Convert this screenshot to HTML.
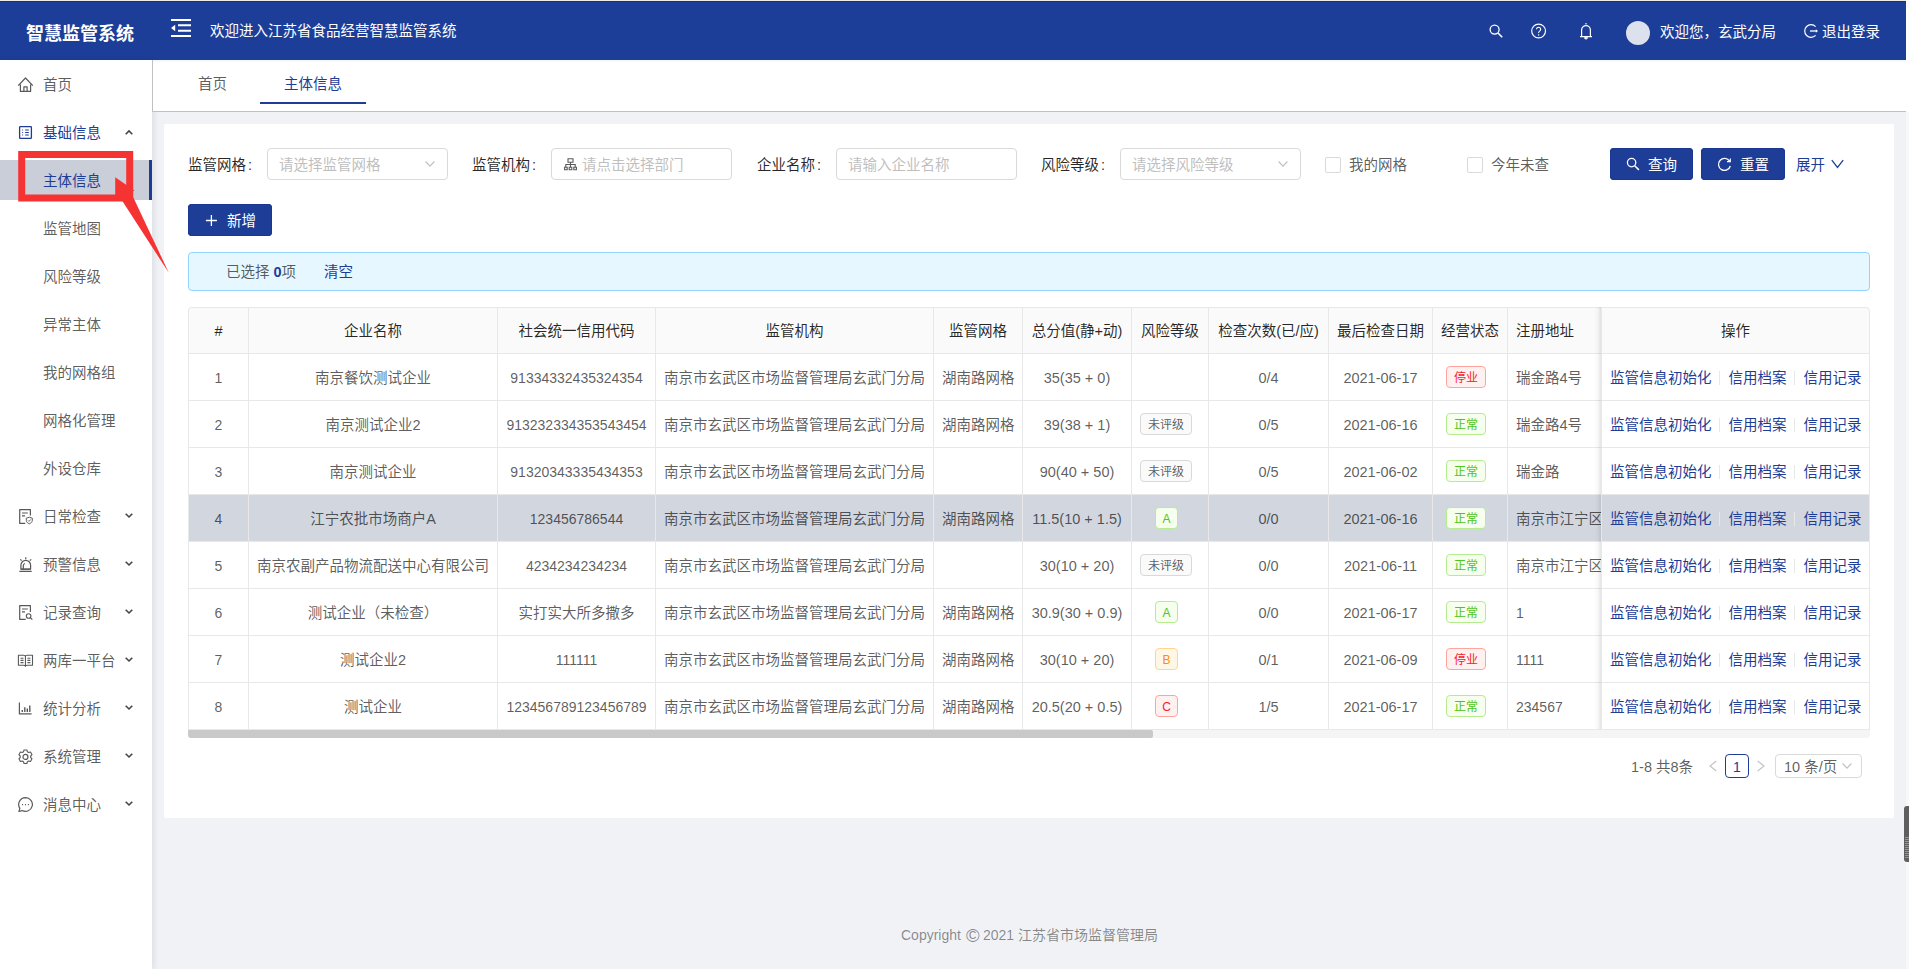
<!DOCTYPE html>
<html lang="zh-CN">
<head>
<meta charset="utf-8">
<title>智慧监管系统</title>
<style>
*{box-sizing:border-box;}
html,body{margin:0;padding:0;}
body{width:1909px;height:969px;overflow:hidden;position:relative;background:#f0f2f5;
 font-family:"Liberation Sans","Noto Sans CJK SC",sans-serif;font-size:14.5px;color:rgba(0,0,0,.65);line-height:22px;}
.abs{position:absolute;}
svg{display:block;}
/* header */
#hdr{position:absolute;left:0;top:1px;width:1906px;height:59px;background:#1d3e98;color:#fff;box-shadow:inset 0 1px 0 #13328e;}
#logo{position:absolute;left:26px;top:0;height:59px;line-height:66px;font-size:18px;font-weight:700;letter-spacing:0;white-space:nowrap;}
#welcome{position:absolute;left:210px;top:0;line-height:60px;white-space:nowrap;}
#user{position:absolute;left:1660px;top:0;line-height:62px;white-space:nowrap;}
#logout{position:absolute;left:1822px;top:0;line-height:62px;white-space:nowrap;}
#avatar{position:absolute;left:1626px;top:20px;width:24px;height:24px;border-radius:50%;background:#dde1ee;}
/* sidebar */
#side{position:absolute;left:0;top:60px;width:152px;height:909px;background:#fff;box-shadow:2px 0 6px rgba(0,21,41,.09);}
.mi{position:absolute;left:0;width:152px;height:40px;line-height:40px;white-space:nowrap;}
.mi span{position:absolute;left:43px;top:1px;}
.mi svg{position:absolute;left:17px;top:12px;}
.mi .arr{position:absolute;left:124px;top:16px;}
.mi.sel{background:#c9ced9;color:#1d3d97;}
.mi.sel:after{content:"";position:absolute;right:0;top:0;width:3px;height:40px;background:#1d3d97;}
.mi.open{color:#1d3d97;}
/* tabs */
#tabs{position:absolute;left:152px;top:60px;width:1754px;height:52px;background:#fff;border-bottom:1px solid #c0c0c0;border-left:1px solid #c0c0c0;box-shadow:inset 0 3px 3px -2px rgba(0,0,0,.06);}
#tabs div{position:absolute;top:13px;line-height:22px;white-space:nowrap;}
/* card */
#card{position:absolute;left:164px;top:124px;width:1730px;height:694px;background:#fff;border-radius:2px;}
.lbl b{font-weight:400;margin-left:2px;}
.lbl{position:absolute;top:154px;line-height:22px;color:rgba(0,0,0,.85);white-space:nowrap;}
.inp{position:absolute;top:148px;height:32px;width:181px;border:1px solid #d9d9d9;border-radius:4px;background:#fff;line-height:30px;color:#bfbfbf;white-space:nowrap;}
.inp span{position:absolute;left:11px;top:1px;}
.btn{position:absolute;height:32px;border-radius:4px;background:#1d3d97;box-shadow:inset 0 0 0 1px #1a3891;color:#fff;line-height:32px;white-space:nowrap;}
.cb{position:absolute;top:157px;width:16px;height:16px;border:1px solid #d9d9d9;border-radius:2px;background:#fff;}
.cbl{position:absolute;top:154px;line-height:22px;white-space:nowrap;}
#alert{position:absolute;left:188px;top:252px;width:1682px;height:39px;background:#e6f7ff;border:1px solid #91d5ff;border-radius:4px;line-height:37px;white-space:nowrap;}
/* table */
#tbl{position:absolute;left:188px;top:307px;width:1682px;border-collapse:separate;border-spacing:0;table-layout:fixed;border-left:1px solid #e8e8e8;border-top:1px solid #e8e8e8;border-radius:4px 4px 0 0;}
#tbl th:first-child{border-top-left-radius:4px;}
#tbl th:last-child{border-top-right-radius:4px;}
#tbl th,#tbl td{height:47px;padding:0 8px;border-right:1px solid #e8e8e8;border-bottom:1px solid #e8e8e8;text-align:center;white-space:nowrap;overflow:hidden;font-weight:400;line-height:22px;}
#tbl th{background:#fafafa;color:rgba(0,0,0,.85);font-weight:400;height:46px;}
#tbl td{background:#fff;padding-top:2px;}
#tbl tr.hl td{background:#d2d6df;}
#tbl .l{text-align:left;}
#tbl .n{font-size:14px;}
#tbl a{color:#1d3d97;text-decoration:none;}
#tbl i{display:inline-block;width:1px;height:14px;background:#e8e8e8;margin:0 8.500px 0 7.500px;vertical-align:-2px;}
.tag{display:inline-block;height:22px;line-height:22px;padding:0 7px;font-size:12px;border:1px solid #d9d9d9;border-radius:4px;background:#fafafa;color:rgba(0,0,0,.65);margin-right:8px;vertical-align:middle;position:relative;top:-2px;}
.tag.g{color:#52c41a;background:#f6ffed;border-color:#b7eb8f;}
.tag.r{color:#f5222d;background:#fff1f0;border-color:#ffa39e;}
.tag.s{padding:0;width:23px;text-align:center;margin-left:.5px;margin-right:7.500px;}
.tag.o{color:#fa8c16;background:#fff7e6;border-color:#ffd591;}
</style>
</head>
<body>
<div class="abs" style="left:0;top:0;width:1909px;height:1px;background:#ecebe6"></div>
<div class="abs" style="left:1906px;top:0;width:3px;height:112px;background:#fff"></div>
<div class="abs" style="left:1906px;top:112px;width:3px;height:857px;background:#f7f8fa"></div>

<div id="hdr">
 <div id="logo">智慧监管系统</div>
 <svg class="abs" style="left:171px;top:18px" width="20" height="18" viewBox="0 0 20 18"><path d="M0 0h20v2H0zM7 5.300h13v2H7zM7 10.700h13v2H7zM0 16h20v2H0zM0 9l4.200-3.200v6.400z" fill="#fff"/></svg>
 <div id="welcome">欢迎进入江苏省食品经营智慧监管系统</div>

 <svg class="abs" style="left:1488px;top:22px" width="16" height="16" viewBox="0 0 16 16" fill="none" stroke="#fff"><circle cx="6.600" cy="6.600" r="4.500" stroke-width="1.300"/><path d="M10 10l4.200 4.200" stroke-width="1.600"/></svg>
 <svg class="abs" style="left:1530px;top:22px" width="17" height="17" viewBox="0 0 17 17" fill="none" stroke="#fff"><circle cx="8.600" cy="8" r="6.900" stroke-width="1.200"/><path d="M6.500 6.300a2.100 2.100 0 1 1 3.200 1.800c-.8.500-1.100.900-1.100 1.700v.3" stroke-width="1.100"/><path d="M8.600 11.300v1.200" stroke-width="1.200"/></svg>
 <svg class="abs" style="left:1579px;top:21px" width="14" height="18" viewBox="0 0 14 18" fill="none" stroke="#fff" stroke-width="1.200"><path d="M7 .9v1.600M2.600 14.600V8a4.400 4.400 0 0 1 8.800 0v6.600M1 14.700h12"/><path d="M5.500 15.600a1.500 1.500 0 0 0 3 0z" fill="#fff" stroke-width=".8"/></svg>
 <svg class="abs" style="left:1803px;top:22px" width="16" height="16" viewBox="0 0 16 16" fill="none" stroke="#fff"><path d="M12.600 3.700a6.300 6.300 0 1 0 0 8.600" stroke-width="1.200"/><path d="M7 8h6.300" stroke-width="1.300"/><path d="M12.800 6.200 15 8l-2.200 1.800z" fill="#fff" stroke="none"/></svg>
 <div id="avatar"></div>
 <div id="user">欢迎您，玄武分局</div>
 <div id="logout">退出登录</div>
</div>

<div id="side">
 <div class="mi" style="top:4px"><svg width="18" height="18" viewBox="0 0 18 18" fill="none" stroke="#595959" stroke-width="1.2" stroke-linejoin="round"><path d="M1.2 9.6 8.5 2l7.3 7.6M3.4 8.6v6.8h10.2V8.6M6.9 15.4v-4.6h3.2v4.6"/></svg><span>首页</span></div>
 <div class="mi open" style="top:52px"><svg width="18" height="18" viewBox="0 0 18 18" fill="none" stroke="#1d3d97" stroke-width="1.3" stroke-linejoin="round"><rect x="2.6" y="2.6" width="11.8" height="11.8" rx=".6"/><path d="M8.200 6h3.600M8.200 8.500h3.600M8.200 11h3.600" stroke-width="1.100"/><path d="M5.200 6h.9M5.200 8.500h.9M5.200 11h.9" stroke-width="1"/></svg><span>基础信息</span><svg class="arr" width="10" height="8" viewBox="0 0 10 8" fill="none" stroke="#444" stroke-width="1.600"><path d="M1.700 6.300 5 3l3.300 3.300"/></svg></div>
 <div class="mi sel" style="top:100px"><span>主体信息</span></div>
 <div class="mi" style="top:148px"><span>监管地图</span></div>
 <div class="mi" style="top:196px"><span>风险等级</span></div>
 <div class="mi" style="top:244px"><span>异常主体</span></div>
 <div class="mi" style="top:292px"><span>我的网格组</span></div>
 <div class="mi" style="top:340px"><span>网格化管理</span></div>
 <div class="mi" style="top:388px"><span>外设仓库</span></div>
 <div class="mi" style="top:436px"><svg width="18" height="18" viewBox="0 0 18 18" fill="none" stroke="#595959" stroke-width="1.2" stroke-linejoin="round"><path d="M13.4 7.6V1.6H2.7v13.8h5.6M5 5h5.8M5 7.8h3"/><path d="M12.3 9.2l3 1v2.3c0 1.6-1.6 2.7-3 3.3-1.400-.6-3-1.700-3-3.300v-2.300z" stroke-width="1"/><path d="M11 12.400l1 1 1.700-1.900" stroke-width=".9"/></svg><span>日常检查</span><svg class="arr" width="10" height="8" viewBox="0 0 10 8" fill="none" stroke="#444" stroke-width="1.600"><path d="M1.700 1.800 5 5l3.300-3.200"/></svg></div>
 <div class="mi" style="top:484px"><svg width="18" height="18" viewBox="0 0 18 18" fill="none" stroke="#595959" stroke-width="1.2" stroke-linejoin="round"><path d="M2.4 15.300h12.300M3.900 13.200V9.200a4.850 4.850 0 0 1 9.700 0v4zM8.750 1.200v2M3.300 3.300l1.300 1.300M14.200 3.300l-1.300 1.300M6.300 12.500V9.600a2.400 2.400 0 0 1 1.600-2.100" /><path d="M3.900 13.200h9.700"/></svg><span>预警信息</span><svg class="arr" width="10" height="8" viewBox="0 0 10 8" fill="none" stroke="#444" stroke-width="1.600"><path d="M1.700 1.800 5 5l3.300-3.200"/></svg></div>
 <div class="mi" style="top:532px"><svg width="18" height="18" viewBox="0 0 18 18" fill="none" stroke="#595959" stroke-width="1.2" stroke-linejoin="round"><path d="M13.400 8V1.600H2.700v13.800h6M5 5h5.800M5 7.800h3"/><circle cx="11.600" cy="12" r="2.300" stroke-width="1.100"/><path d="M13.300 13.700l2 2"/></svg><span>记录查询</span><svg class="arr" width="10" height="8" viewBox="0 0 10 8" fill="none" stroke="#444" stroke-width="1.600"><path d="M1.700 1.800 5 5l3.300-3.200"/></svg></div>
 <div class="mi" style="top:580px"><svg width="18" height="18" viewBox="0 0 18 18" fill="none" stroke="#595959" stroke-width="1.2" stroke-linejoin="round"><path d="M8.450 3.600v10.300M1.400 3.300h5.200c1 0 1.850.4 1.850 1.300 0-.9.850-1.300 1.850-1.300h5.200v10h-5.200c-1 0-1.850.3-1.850 1 0-.7-.85-1-1.850-1H1.400zM3.500 6.200h3M3.500 8.400h3M3.500 10.600h3M10.400 6.200h3M10.400 8.400h3M10.400 10.600h3" stroke-width="1.100"/></svg><span>两库一平台</span><svg class="arr" width="10" height="8" viewBox="0 0 10 8" fill="none" stroke="#444" stroke-width="1.600"><path d="M1.700 1.800 5 5l3.300-3.200"/></svg></div>
 <div class="mi" style="top:628px"><svg width="18" height="18" viewBox="0 0 18 18" fill="none" stroke="#595959" stroke-width="1.2" stroke-linejoin="round"><path d="M2.400 2.400v11.500h12.200"/><path d="M5.300 12v-2M7.800 12V7.200M10.300 12V8.600M12.800 12V5.600" stroke-width="1.400"/></svg><span>统计分析</span><svg class="arr" width="10" height="8" viewBox="0 0 10 8" fill="none" stroke="#444" stroke-width="1.600"><path d="M1.700 1.800 5 5l3.300-3.200"/></svg></div>
 <div class="mi" style="top:676px"><svg width="18" height="18" viewBox="0 0 18 18" fill="none" stroke="#595959" stroke-width="1.2" stroke-linejoin="round"><circle cx="8.450" cy="8.900" r="2.500"/><path d="M7 2l-.5 1.800-1.300.75-1.800-.5-1.500 2.600 1.300 1.350v1.500l-1.300 1.350 1.500 2.600 1.800-.5 1.300.75.500 1.800h2.900l.5-1.800 1.300-.75 1.800.5 1.500-2.600-1.300-1.350v-1.500l1.300-1.350-1.500-2.600-1.800.5-1.300-.75L9.900 2z" stroke-width="1.100"/></svg><span>系统管理</span><svg class="arr" width="10" height="8" viewBox="0 0 10 8" fill="none" stroke="#444" stroke-width="1.600"><path d="M1.700 1.800 5 5l3.300-3.200"/></svg></div>
 <div class="mi" style="top:724px"><svg width="18" height="18" viewBox="0 0 18 18" fill="none" stroke="#595959" stroke-width="1.2" stroke-linejoin="round"><path d="M8.500 1.600a6.900 6.900 0 1 1-3.300 12.960L1.900 15.500l.95-3.200A6.900 6.900 0 0 1 8.500 1.600z"/><path d="M5.100 8.600h1M8 8.600h1M10.900 8.600h1" stroke-width="1.300"/></svg><span>消息中心</span><svg class="arr" width="10" height="8" viewBox="0 0 10 8" fill="none" stroke="#444" stroke-width="1.600"><path d="M1.700 1.800 5 5l3.300-3.200"/></svg></div>
</div>

<div id="tabs">
 <div style="left:45px">首页</div>
 <div style="left:131px;color:#1d3d97">主体信息</div>
 <div style="left:107px;top:42px;width:106px;height:2px;background:#1d3d97"></div>
</div>

<div id="card"></div>

<div class="lbl" style="left:188px">监管网格<b>:</b></div>
<div class="inp" style="left:267px"><span>请选择监管网格</span></div>
<div class="lbl" style="left:472px">监管机构<b>:</b></div>
<div class="inp" style="left:551px"><span style="left:30px">请点击选择部门</span></div>
<div class="lbl" style="left:757px">企业名称<b>:</b></div>
<div class="inp" style="left:836px"><span>请输入企业名称</span></div>
<div class="lbl" style="left:1041px">风险等级<b>:</b></div>
<div class="inp" style="left:1120px"><span>请选择风险等级</span></div>
<div class="cb" style="left:1325px"></div><div class="cbl" style="left:1349px">我的网格</div>
<div class="cb" style="left:1467px"></div><div class="cbl" style="left:1491px">今年未查</div>
<div class="btn" style="left:1610px;top:148px;width:83px"><span class="abs" style="left:38px;top:1px">查询</span></div>
<div class="btn" style="left:1701px;top:148px;width:84px"><span class="abs" style="left:39px;top:1px">重置</span></div>
<div class="abs" style="left:1796px;top:154px;color:#1d3d97;white-space:nowrap">展开</div>
<div class="btn" style="left:188px;top:204px;width:84px"><span class="abs" style="left:39px;top:1px">新增</span></div>

<div id="alert"><span class="abs" style="left:37px;top:1px">已选择 <b style="color:#1d3d97;font-weight:700">0</b>项</span><span class="abs" style="left:135px;top:1px;color:#1d3d97">清空</span></div>

<table id="tbl">
<colgroup><col style="width:60px"><col style="width:249px"><col style="width:158px"><col style="width:278px"><col style="width:89px"><col style="width:109px"><col style="width:77px"><col style="width:120px"><col style="width:104px"><col style="width:75px"><col style="width:94px"><col style="width:268px"></colgroup>
<tr><th>#</th><th>企业名称</th><th>社会统一信用代码</th><th>监管机构</th><th>监管网格</th><th>总分值(静+动)</th><th>风险等级</th><th>检查次数(已/应)</th><th>最后检查日期</th><th>经营状态</th><th class="l">注册地址</th><th>操作</th></tr>
<!--rows-->
<tr><td class="n">1</td><td>南京餐饮测试企业</td><td class="n">91334332435324354</td><td>南京市玄武区市场监督管理局玄武门分局</td><td>湖南路网格</td><td>35(35 + 0)</td><td></td><td>0/4</td><td>2021-06-17</td><td><span class="tag r">停业</span></td><td class="l">瑞金路4号</td><td><a>监管信息初始化</a><i></i><a>信用档案</a><i></i><a>信用记录</a></td></tr>
<tr><td class="n">2</td><td>南京测试企业2</td><td class="n">913232334353543454</td><td>南京市玄武区市场监督管理局玄武门分局</td><td>湖南路网格</td><td>39(38 + 1)</td><td><span class="tag">未评级</span></td><td>0/5</td><td>2021-06-16</td><td><span class="tag g">正常</span></td><td class="l">瑞金路4号</td><td><a>监管信息初始化</a><i></i><a>信用档案</a><i></i><a>信用记录</a></td></tr>
<tr><td class="n">3</td><td>南京测试企业</td><td class="n">91320343335434353</td><td>南京市玄武区市场监督管理局玄武门分局</td><td></td><td>90(40 + 50)</td><td><span class="tag">未评级</span></td><td>0/5</td><td>2021-06-02</td><td><span class="tag g">正常</span></td><td class="l">瑞金路</td><td><a>监管信息初始化</a><i></i><a>信用档案</a><i></i><a>信用记录</a></td></tr>
<tr class="hl"><td class="n">4</td><td>江宁农批市场商户A</td><td class="n">123456786544</td><td>南京市玄武区市场监督管理局玄武门分局</td><td>湖南路网格</td><td>11.5(10 + 1.5)</td><td><span class="tag s g">A</span></td><td>0/0</td><td>2021-06-16</td><td><span class="tag g">正常</span></td><td class="l">南京市江宁区农副产品物流中心</td><td><a>监管信息初始化</a><i></i><a>信用档案</a><i></i><a>信用记录</a></td></tr>
<tr><td class="n">5</td><td>南京农副产品物流配送中心有限公司</td><td class="n">4234234234234</td><td>南京市玄武区市场监督管理局玄武门分局</td><td></td><td>30(10 + 20)</td><td><span class="tag">未评级</span></td><td>0/0</td><td>2021-06-11</td><td><span class="tag g">正常</span></td><td class="l">南京市江宁区农副产品物流中心</td><td><a>监管信息初始化</a><i></i><a>信用档案</a><i></i><a>信用记录</a></td></tr>
<tr><td class="n">6</td><td>测试企业（未检查）</td><td>实打实大所多撒多</td><td>南京市玄武区市场监督管理局玄武门分局</td><td>湖南路网格</td><td>30.9(30 + 0.9)</td><td><span class="tag s g">A</span></td><td>0/0</td><td>2021-06-17</td><td><span class="tag g">正常</span></td><td class="l n">1</td><td><a>监管信息初始化</a><i></i><a>信用档案</a><i></i><a>信用记录</a></td></tr>
<tr><td class="n">7</td><td>测试企业2</td><td class="n">111111</td><td>南京市玄武区市场监督管理局玄武门分局</td><td>湖南路网格</td><td>30(10 + 20)</td><td><span class="tag s o">B</span></td><td>0/1</td><td>2021-06-09</td><td><span class="tag r">停业</span></td><td class="l n">1111</td><td><a>监管信息初始化</a><i></i><a>信用档案</a><i></i><a>信用记录</a></td></tr>
<tr><td class="n">8</td><td>测试企业</td><td class="n">123456789123456789</td><td>南京市玄武区市场监督管理局玄武门分局</td><td>湖南路网格</td><td>20.5(20 + 0.5)</td><td><span class="tag s r">C</span></td><td>1/5</td><td>2021-06-17</td><td><span class="tag g">正常</span></td><td class="l n">234567</td><td><a>监管信息初始化</a><i></i><a>信用档案</a><i></i><a>信用记录</a></td></tr>
<!--/rows-->
</table>


<!-- filter icons -->
<svg class="abs" style="left:425px;top:159px" width="10" height="10" viewBox="0 0 10 10" fill="none" stroke="#bfbfbf" stroke-width="1.100"><path d="M.6 2.500 5 7.200l4.400-4.700"/></svg>
<svg class="abs" style="left:1278px;top:159px" width="10" height="10" viewBox="0 0 10 10" fill="none" stroke="#bfbfbf" stroke-width="1.100"><path d="M.6 2.500 5 7.200l4.400-4.700"/></svg>
<svg class="abs" style="left:564px;top:158px" width="13" height="13" viewBox="0 0 13 13" fill="none" stroke="#595959" stroke-width="1.100"><path d="M4 .8h5v3.400H4zM6.500 4.200v2.300M1.800 9V6.500h9.400V9M6.500 6.500V9M.6 9.200h2.600v2.600H.6zM5.200 9.200h2.600v2.600H5.200zM9.800 9.200h2.600v2.600H9.800z"/></svg>
<svg class="abs" style="left:1626px;top:157px" width="14" height="14" viewBox="0 0 14 14" fill="none" stroke="#fff"><circle cx="5.600" cy="5.600" r="4.200" stroke-width="1.300"/><path d="M8.700 8.700l4.200 4.200" stroke-width="1.500"/></svg>
<svg class="abs" style="left:1717px;top:157px" width="15" height="15" viewBox="0 0 15 15" fill="none" stroke="#fff" stroke-width="1.300"><path d="M12.600 4.200A6 6 0 1 0 13.300 9"/><path d="M13.300 1.400v3.300H10" stroke-width="1.200"/></svg>
<svg class="abs" style="left:1831px;top:158px" width="13" height="12" viewBox="0 0 13 12" fill="none" stroke="#1d3d97" stroke-width="1.300"><path d="M.8 2.200 6.500 9.400l5.700-7.200"/></svg>
<svg class="abs" style="left:205px;top:214px" width="13" height="13" viewBox="0 0 13 13" fill="none" stroke="#fff" stroke-width="1.300"><path d="M6.400 1v11M.9 6.500h11"/></svg>

<!-- scrollbar -->
<div class="abs" style="left:188px;top:730px;width:1682px;height:8px;background:#f5f5f5;border-radius:0 0 4px 4px"></div>
<div class="abs" style="left:188px;top:730px;width:965px;height:8px;background:#c9c9c9;border-radius:0 2px 2px 3px"></div>
<!-- fixed column shadow -->
<div class="abs" style="left:1594px;top:307px;width:7px;height:422px;background:linear-gradient(to right,rgba(0,0,0,0),rgba(0,0,0,.025) 50%,rgba(0,0,0,.10))"></div>

<!-- pagination -->
<div class="abs" style="left:1631px;top:756px;line-height:22px;white-space:nowrap">1-8 共8条</div>
<svg class="abs" style="left:1708px;top:760px" width="10" height="12" viewBox="0 0 10 12" fill="none" stroke="#c4c4c4" stroke-width="1.200"><path d="M8.300 1 2 6l6.300 5"/></svg>
<div class="abs" style="left:1725px;top:754px;width:24px;height:24px;border:1px solid #1d3d97;border-radius:4px;line-height:24px;text-align:center;color:#1d3d97;font-size:14px">1</div>
<svg class="abs" style="left:1756px;top:760px" width="10" height="12" viewBox="0 0 10 12" fill="none" stroke="#c4c4c4" stroke-width="1.200"><path d="M1.700 1 8 6l-6.300 5"/></svg>
<div class="abs" style="left:1775px;top:754px;width:87px;height:24px;border:1px solid #d9d9d9;border-radius:4px;line-height:22px;white-space:nowrap"><span class="abs" style="left:8px;top:1px">10 条/页</span></div>
<svg class="abs" style="left:1842px;top:761px" width="10" height="10" viewBox="0 0 10 10" fill="none" stroke="#bfbfbf" stroke-width="1.100"><path d="M.6 2.500 5 7.200l4.400-4.700"/></svg>

<!-- right edge widget -->
<div class="abs" style="left:1904px;top:806px;width:5px;height:56px;background:#5f5f5f;border-radius:3px 0 0 3px"></div>
<div class="abs" style="left:1905px;top:837px;width:4px;height:22px;background:repeating-linear-gradient(to bottom,#3ecf5a 0,#3ecf5a 1px,#5f5f5f 1px,#5f5f5f 2px)"></div>

<!-- red annotation -->
<svg class="abs" style="left:0;top:140px" width="200" height="150" viewBox="0 140 200 150"><rect x="21.700" y="154.500" width="108" height="43.500" fill="none" stroke="#f63333" stroke-width="7"/><path d="M115.200 177.300 134.400 190.500 131 192.500 168.800 272.800 122 200.500 115.200 198z" fill="#f63333"/></svg>

<div class="abs" style="left:0;top:924px;width:1909px;height:22px;font-size:14px;color:rgba(0,0,0,.45);white-space:nowrap"><span class="abs" style="left:901px">Copyright</span><span class="abs" style="left:966px;font-size:18.500px;top:1px">©</span><span class="abs" style="left:983px">2021</span><span class="abs" style="left:1018px">江苏省市场监督管理局</span></div>
</body>
</html>
